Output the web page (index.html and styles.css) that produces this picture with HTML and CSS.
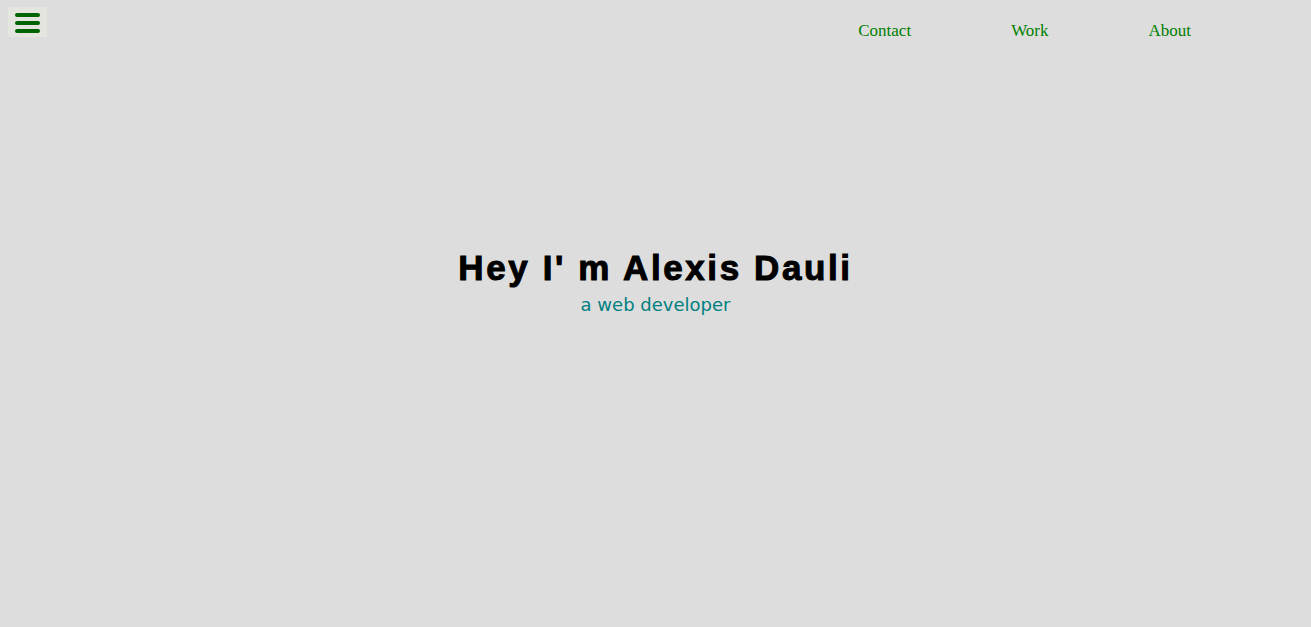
FILE: index.html
```html
<!DOCTYPE html>
<html lang="en">
<head>
<meta charset="utf-8">
<title>Alexis Dauli</title>
<link rel="stylesheet" href="styles.css">
</head>
<body>
<header class="topbar">
  <button class="menu-btn" aria-label="Menu">
    <span class="bar"></span>
    <span class="bar"></span>
    <span class="bar"></span>
  </button>
  <nav class="nav">
    <a class="nav-link" href="#contact">Contact</a>
    <a class="nav-link" href="#work">Work</a>
    <a class="nav-link" href="#about">About</a>
  </nav>
</header>
<main class="hero">
  <h1 class="hero-title">Hey I' m Alexis Dauli</h1>
  <p class="hero-sub">a web developer</p>
</main>
</body>
</html>
```
FILE: styles.css
```css
html, body {
  margin: 0;
  padding: 0;
}
body {
  background: #dddddd;
  width: 1311px;
  height: 627px;
  overflow: hidden;
  font-family: "Liberation Serif", "Times New Roman", serif;
}
.topbar {
  display: flex;
  align-items: flex-start;
  height: 40px;
}
.menu-btn {
  margin: 7px 0 0 8px;
  width: 39px;
  height: 30px;
  padding: 6px 0 0 7px;
  border: none;
  background: #e5e5e0;
  display: flex;
  flex-direction: column;
  gap: 4px;
  box-sizing: border-box;
}
.bar {
  display: block;
  width: 25px;
  height: 4px;
  border-radius: 2px;
  background: #006400;
}
.nav {
  margin-left: auto;
  padding: 21px 120px 0 0;
  display: flex;
  gap: 100px;
}
.nav-link {
  font-size: 17px;
  line-height: 20px;
  color: #008000;
  text-decoration: none;
}
.hero {
  padding-top: 208px;
  text-align: center;
}
.hero-title {
  margin: 0;
  font-family: "Liberation Sans", Arial, sans-serif;
  font-weight: 700;
  font-size: 35px;
  line-height: 40px;
  letter-spacing: 2.6px;
  -webkit-text-stroke: 1px #000;
  color: #000;
}
.hero-sub {
  margin: 6px 0 0;
  font-family: "DejaVu Sans", sans-serif;
  font-size: 18px;
  line-height: 22px;
  color: #008080;
}
```
